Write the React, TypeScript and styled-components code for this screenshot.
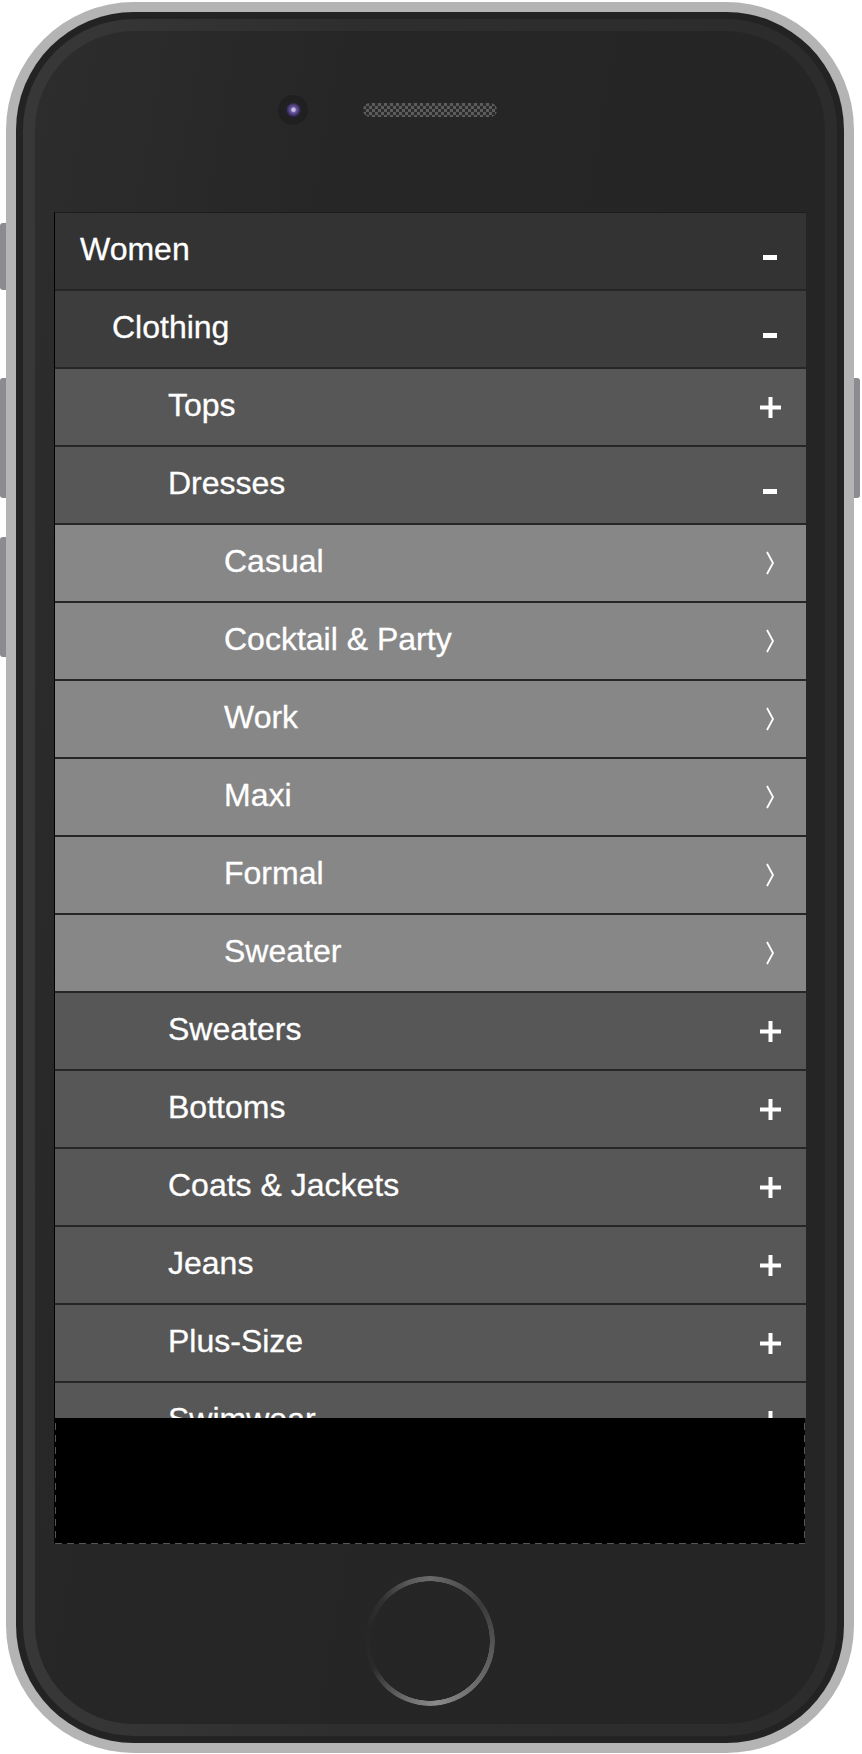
import React from "react";
import styled, { createGlobalStyle } from "styled-components";

const GlobalStyle = createGlobalStyle`
    html, body {
        margin: 0;
        padding: 0;
        background: #ffffff;
    }
    body {
        font-family: "Liberation Sans", Arial, sans-serif;
    }
`;

const Page = styled.div`
    width: 862px;
    height: 1754px;
    padding: 2px 0 0 6px;
    box-sizing: border-box;
`;

const PhoneShell = styled.div`
    position: relative;
    width: 848px;
    height: 1751px;
    box-sizing: border-box;
    padding: 10px;
    border-radius: 128px;
    background: #b4b4b4;
`;

const SideButton = styled.div<{ side: "left" | "right"; top: number; length: number }>`
    position: absolute;
    top: ${(p) => p.top}px;
    ${(p) => (p.side === "left" ? "left: -6px;" : "right: -6px;")}
    width: 6px;
    height: ${(p) => p.length}px;
    background: #8b8b90;
    border-radius: ${(p) => (p.side === "left" ? "3px 0 0 3px" : "0 3px 3px 0")};
`;

const Bezel = styled.div`
    height: 100%;
    box-sizing: border-box;
    padding: 7px;
    border-radius: 118px;
    background: #232323;
`;

const FaceRing = styled.div`
    height: 100%;
    box-sizing: border-box;
    padding: 12px;
    border-radius: 111px;
    background: linear-gradient(90deg, #383838 0%, #2e2e2e 40%, #2c2c2c 100%);
`;

const Face = styled.div`
    height: 100%;
    box-sizing: border-box;
    padding: 0 19px;
    border-radius: 99px;
    background: linear-gradient(100deg, #2d2d2d 0%, #262626 30%, #252525 100%);
    display: flex;
    flex-direction: column;
`;

const TopBar = styled.div`
    height: 181px;
    box-sizing: border-box;
    padding-bottom: 23px;
    display: flex;
    align-items: center;
    justify-content: center;
    gap: 55px;
`;

const Camera = styled.div`
    width: 30px;
    height: 30px;
    border-radius: 50%;
    background: radial-gradient(circle, #242424 0%, #1d1d1d 100%);
    display: flex;
    align-items: center;
    justify-content: center;
`;

const Lens = styled.div`
    width: 15px;
    height: 15px;
    border-radius: 50%;
    background: radial-gradient(circle at 50% 45%, #c9bde6 0 1.5px, #6a58a0 3px, #3c3060 6px, #221b33 7.5px);
`;

const Speaker = styled.div`
    width: 134px;
    height: 14px;
    border-radius: 7px;
    background-color: #333;
    background-image: conic-gradient(#5c5c5c 25%, #2c2c2c 0 50%, #5c5c5c 0 75%, #2c2c2c 0);
    background-size: 6px 6px;
`;

const SpeakerBalance = styled.div`
    width: 30px;
`;

const Screen = styled.div`
    height: 1332px;
    display: flex;
    flex-direction: column;
    border-left: 1px solid #000;
    border-top: 1px solid #1c1c1c;
    box-sizing: border-box;
`;

const MenuViewport = styled.div`
    height: 1205px;
    overflow: hidden;
`;

const MenuRow = styled.div<{ level: number }>`
    height: 76px;
    border-bottom: 2px solid #262626;
    display: flex;
    align-items: center;
    padding-left: ${(p) => [25, 57, 113, 169][p.level]}px;
    padding-right: 16px;
    background: ${(p) => ["#333333", "#3d3d3d", "#575757", "#878787"][p.level]};
    color: #ffffff;
    font-size: 32px;
`;

const Label = styled.span`
    flex: 1;
    white-space: nowrap;
    padding-bottom: 4px;
    -webkit-text-stroke: 0.3px #ffffff;
`;

const IconSlot = styled.span`
    width: 40px;
    display: flex;
    justify-content: center;
    align-items: center;
`;

const MinusMark = styled.svg`
    margin-top: 13px;
`;

const Placeholder = styled.div`
    flex: 1;
    margin-right: 1px;
    background:
        repeating-linear-gradient(to bottom, #555 0 7px, transparent 7px 12px) left 5px / 1px 100% no-repeat,
        repeating-linear-gradient(to bottom, #555 0 7px, transparent 7px 12px) right 5px / 1px 100% no-repeat,
        repeating-linear-gradient(to right, #555 0 7px, transparent 7px 12px) left bottom / 100% 1px no-repeat,
        #000;
`;

const BottomBar = styled.div`
    flex: 1;
    display: flex;
    justify-content: center;
    padding-top: 32px;
`;

const HomeButton = styled.div`
    width: 130px;
    height: 130px;
    border-radius: 50%;
    background: conic-gradient(
        from 0deg,
        #6a6a6a 0deg,
        #555 25deg,
        #3a3a3a 55deg,
        #5a5a5a 100deg,
        #707070 140deg,
        #8a8a8a 175deg,
        #6a6a6a 205deg,
        #2a2a2a 245deg,
        #262626 280deg,
        #303030 310deg,
        #5a5a5a 340deg,
        #6a6a6a 360deg
    );
    -webkit-mask: radial-gradient(circle, transparent 59.5px, #000 60px);
    mask: radial-gradient(circle, transparent 59.5px, #000 60px);
`;

type RowKind = "minus" | "plus" | "chevron";

type MenuItem = {
    label: string;
    level: number;
    kind: RowKind;
};

const menuItems: MenuItem[] = [
    { label: "Women", level: 0, kind: "minus" },
    { label: "Clothing", level: 1, kind: "minus" },
    { label: "Tops", level: 2, kind: "plus" },
    { label: "Dresses", level: 2, kind: "minus" },
    { label: "Casual", level: 3, kind: "chevron" },
    { label: "Cocktail & Party", level: 3, kind: "chevron" },
    { label: "Work", level: 3, kind: "chevron" },
    { label: "Maxi", level: 3, kind: "chevron" },
    { label: "Formal", level: 3, kind: "chevron" },
    { label: "Sweater", level: 3, kind: "chevron" },
    { label: "Sweaters", level: 2, kind: "plus" },
    { label: "Bottoms", level: 2, kind: "plus" },
    { label: "Coats & Jackets", level: 2, kind: "plus" },
    { label: "Jeans", level: 2, kind: "plus" },
    { label: "Plus-Size", level: 2, kind: "plus" },
    { label: "Swimwear", level: 2, kind: "plus" },
];

const RowIcon: React.FC<{ kind: RowKind }> = ({ kind }) => {
    if (kind === "minus") {
        return (
            <MinusMark width="14" height="5" viewBox="0 0 14 5">
                <rect x="0" y="0" width="14" height="5" fill="#fff" />
            </MinusMark>
        );
    }
    if (kind === "plus") {
        return (
            <svg width="21" height="21" viewBox="0 0 21 21">
                <rect x="8.5" y="0" width="4" height="21" fill="#fff" />
                <rect x="0" y="8.5" width="21" height="4" fill="#fff" />
            </svg>
        );
    }
    return (
        <svg width="10" height="24" viewBox="0 0 10 24">
            <polyline points="2,1 8,12 2,23" fill="none" stroke="#fff" strokeWidth="1.8" />
        </svg>
    );
};

export default function App() {
    return (
        <>
            <GlobalStyle />
            <Page>
                <PhoneShell>
                    <SideButton side="left" top={221} length={67} />
                    <SideButton side="left" top={376} length={120} />
                    <SideButton side="left" top={535} length={120} />
                    <SideButton side="right" top={376} length={120} />
                    <Bezel>
                        <FaceRing>
                            <Face>
                                <TopBar>
                                    <Camera>
                                        <Lens />
                                    </Camera>
                                    <Speaker />
                                    <SpeakerBalance />
                                </TopBar>
                                <Screen>
                                    <MenuViewport>
                                        {menuItems.map((item) => (
                                            <MenuRow key={item.label} level={item.level}>
                                                <Label>{item.label}</Label>
                                                <IconSlot>
                                                    <RowIcon kind={item.kind} />
                                                </IconSlot>
                                            </MenuRow>
                                        ))}
                                    </MenuViewport>
                                    <Placeholder />
                                </Screen>
                                <BottomBar>
                                    <HomeButton />
                                </BottomBar>
                            </Face>
                        </FaceRing>
                    </Bezel>
                </PhoneShell>
            </Page>
        </>
    );
}
